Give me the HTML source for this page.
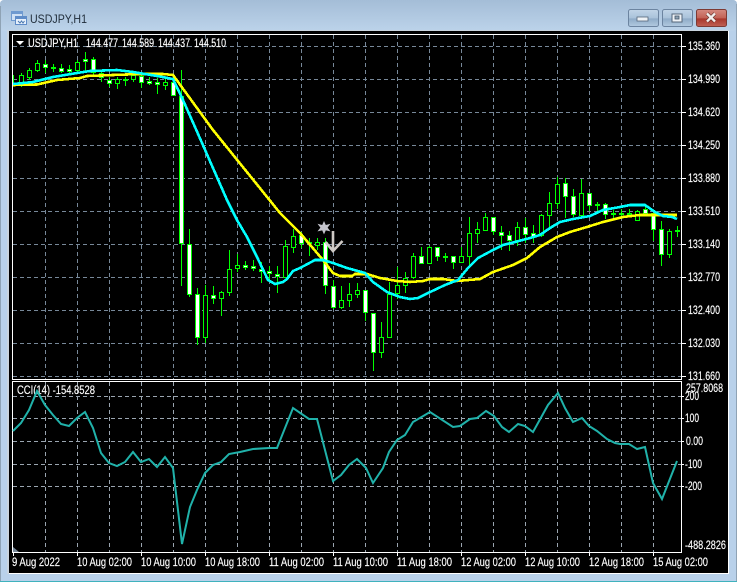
<!DOCTYPE html>
<html><head><meta charset="utf-8"><style>
html,body{margin:0;padding:0;background:#fff}
svg{display:block}
text{font-family:"Liberation Sans",sans-serif;font-size:11.5px;fill:#fff;stroke:#fff;stroke-width:.15}
</style></head><body>
<svg width="739" height="582" viewBox="0 0 739 582" xmlns="http://www.w3.org/2000/svg">
<defs>
<linearGradient id="t" x1="0" y1="0" x2="0" y2="1"><stop offset="0" stop-color="#a4bdd7"/><stop offset="1" stop-color="#bcd3ea"/></linearGradient>
<linearGradient id="b" x1="0" y1="0" x2="0" y2="1"><stop offset="0" stop-color="#c2d5e8"/><stop offset=".5" stop-color="#a9c2da"/><stop offset=".55" stop-color="#8fabc8"/><stop offset="1" stop-color="#b2cae0"/></linearGradient>
<linearGradient id="r" x1="0" y1="0" x2="0" y2="1"><stop offset="0" stop-color="#d58a80"/><stop offset=".5" stop-color="#c26256"/><stop offset=".55" stop-color="#a8362b"/><stop offset="1" stop-color="#c06155"/></linearGradient>
</defs>
<rect x="0" y="0" width="737" height="582" rx="4" fill="#b9d1ea"/>
<rect x="0" y="0" width="737" height="31" rx="4" fill="url(#t)"/>
<path d="M0.5 6V581M736.5 4V581" stroke="#8fa3b5" fill="none"/>
<path d="M0 581.5H737" stroke="#3fb2bd"/>
<path d="M737 0h2v582h-2z" fill="#fff"/>
<!-- icon -->
<g shape-rendering="crispEdges">
<rect x="11.5" y="11.5" width="11" height="9" fill="#cfe0f4" stroke="#6f9ad0"/><rect x="12" y="12" width="10" height="2" fill="#6f9ad0"/>
<rect x="15.5" y="16.5" width="11" height="8" fill="#e6f0fb" stroke="#5f8cc8"/><rect x="16" y="17" width="10" height="2" fill="#5f8cc8"/>
</g>
<path d="M18 21l2 2 1.500-2 1.500 2 1.500-2" stroke="#4a78b0" fill="none"/>
<text x="30" y="23" textLength="57" lengthAdjust="spacingAndGlyphs" style="font-size:12px;fill:#1e2b38;stroke:none">USDJPY,H1</text>
<!-- buttons -->
<rect x="628.500" y="9.500" width="30" height="17" rx="2" fill="url(#b)" stroke="#6c84a0"/>
<rect x="637" y="17" width="11" height="4" fill="#eef2f6" stroke="#55677a" stroke-width=".8"/>
<rect x="662.500" y="9.500" width="30" height="17" rx="2" fill="url(#b)" stroke="#6c84a0"/>
<rect x="672" y="14" width="10" height="8" fill="#eef2f6" stroke="#55677a"/><rect x="675" y="16" width="4" height="3" fill="#8fa3b5" stroke="#44566a" stroke-width=".8"/>
<rect x="696.500" y="9.500" width="30" height="17" rx="2" fill="url(#r)" stroke="#7d3a34"/>
<path d="M707 13.500l8 8M715 13.500l-8 8" stroke="#5b2a25" stroke-width="3.600"/>
<path d="M707 13.500l8 8M715 13.500l-8 8" stroke="#f4f0ee" stroke-width="2.400"/>
<!-- chart bg -->
<rect x="7" y="30" width="722" height="544" fill="#c9d4de"/>
<rect x="9" y="31" width="719" height="542" fill="#000"/>
<path d="M9 573.500H729M728.500 31V574" stroke="#fff" fill="none" shape-rendering="crispEdges"/>
<!-- grid main -->
<g stroke="#778899" fill="none" stroke-dasharray="4 3" shape-rendering="crispEdges">
<path d="M13 46.500H681M13 79.500H681M13 112.500H681M13 145.500H681M13 178.500H681M13 211.500H681M13 244.500H681M13 277.500H681M13 310.500H681M13 343.500H681M13 376.500H681"/>
<path d="M45.500 35V379M77.500 35V379M109.500 35V379M141.500 35V379M173.500 35V379M205.500 35V379M237.500 35V379M269.500 35V379M301.500 35V379M333.500 35V379M365.500 35V379M397.500 35V379M429.500 35V379M461.500 35V379M493.500 35V379M525.500 35V379M557.500 35V379M589.500 35V379M621.500 35V379M653.500 35V379"/>
</g>
<!-- grid indicator -->
<g stroke="#9aa5b0" fill="none" stroke-dasharray="4 3" shape-rendering="crispEdges">
<path d="M13 396.500H681M13 418.500H681M13 441.500H681M13 464.500H681M13 486.500H681"/>
<path d="M45.500 382V552M77.500 382V552M109.500 382V552M141.500 382V552M173.500 382V552M205.500 382V552M237.500 382V552M269.500 382V552M301.500 382V552M333.500 382V552M365.500 382V552M397.500 382V552M429.500 382V552M461.500 382V552M493.500 382V552M525.500 382V552M557.500 382V552M589.500 382V552M621.500 382V552M653.500 382V552"/>
</g>
<!-- frames -->
<path d="M12.500 34.500H681.500V379.500H12.500ZM12.500 381.500H681.500V552.500H12.500Z" stroke="#fff" fill="none" shape-rendering="crispEdges"/>
<path d="M681 46.500h5M681 79.500h5M681 112.500h5M681 145.500h5M681 178.500h5M681 211.500h5M681 244.500h5M681 277.500h5M681 310.500h5M681 343.500h5M681 376.500h5M681 396.500h3M681 418.500h3M681 441.500h3M681 464.500h3M681 486.500h3M13.500 552V556M77.500 552V556M141.500 552V556M205.500 552V556M269.500 552V556M333.500 552V556M397.500 552V556M461.500 552V556M525.500 552V556M589.500 552V556M653.500 552V556" stroke="#fff" fill="none" shape-rendering="crispEdges"/>
<path d="M13 547l6 5h-6z" fill="#778899"/>
<!-- candles: wicks -->
<g fill="none" shape-rendering="crispEdges">
<path stroke="#00ff00" stroke-width="1" d="M13.500 75V84M21.500 73V87M29.500 68V80M37.500 60V72M45.500 60V73M53.500 64V72M61.500 64V73M69.500 65V73M77.500 60V72M85.500 52V71M93.500 57V75M101.500 70V82M109.500 77V87M117.500 77V89M125.500 77V86M133.500 72V82M141.500 74V88M149.500 77V85M157.500 78V94M165.500 78V90M173.500 77V96M181.500 70V286M189.500 229V297M197.500 288V345M205.500 285V343M213.500 286V304M221.500 291V316M229.500 250V296M237.500 254V272M245.500 261V270M253.500 260V271M261.500 262V283M269.500 266V281M277.500 266V293M285.500 240V278M293.500 229V253M301.500 232V248M309.500 238V256M317.500 238V250M325.500 238V294M333.500 280V309M341.500 286V309M349.500 283V307M357.500 283V298M365.500 290V321M373.500 313V371M381.500 322V358M389.500 282V338M397.500 267V299M405.500 272V293M413.500 253V279M421.500 247V264M429.500 246V264M437.500 247V261M445.500 253V262M453.500 256V269M461.500 247V263M469.500 217V267M477.500 222V243M485.500 213V231M493.500 217V235M501.500 226V250M509.500 231V251M517.500 222V246M525.500 218V243M533.500 225V243M541.500 214V237M549.500 192V227M557.500 177V209M565.500 178V218M573.500 189V217M581.500 179V216M589.500 193V211M597.500 202V212M605.500 203V219M613.500 210V218M621.500 209V217M629.500 209V216M637.500 210V221M645.500 204V214M653.500 213V241M661.500 221V266M669.500 229V258M677.500 226V237"/>
<!-- bodies outer -->
<path stroke="#00ff00" stroke-width="5" d="M21.500 75V83M29.500 70V78M37.500 63V71M45.500 64V68M53.500 67V69M61.500 68V72M69.500 69V72M77.500 62V71M85.500 59V62M93.500 59V73M101.500 73V78M109.500 80V84M117.500 79V84M125.500 79V81M133.500 75V80M141.500 76V83M149.500 81V84M157.500 82V85M165.500 82V86M173.500 82V96M181.500 96V244M189.500 244V295M197.500 294V338M205.500 295V338M213.500 295V299M221.500 292V299M229.500 269V293M237.500 265V269M245.500 265V268M253.500 266V269M261.500 269V272M269.500 271V274M277.500 274V277M285.500 246V278M293.500 236V248M301.500 235V244M309.500 242V244M317.500 242V246M325.500 242V286M333.500 286V308M341.500 300V308M349.500 294V301M357.500 290V295M365.500 290V313M373.500 313V353M381.500 337V353M389.500 294V338M397.500 285V294M405.500 278V286M413.500 256V278M421.500 256V264M429.500 247V264M437.500 247V257M445.500 256V258M453.500 256V263M461.500 256V263M469.500 233V257M477.500 229V234M485.500 217V231M493.500 217V232M501.500 232V236M509.500 235V241M517.500 227V241M525.500 227V235M533.500 233V237M541.500 215V236M549.500 203V216M557.500 184V204M565.500 183V197M573.500 196V215M581.500 193V216M589.500 193V206M597.500 204V206M605.500 204V215M613.500 213V215M621.500 213V215M629.500 213V215M637.500 211V221M645.500 209V214M653.500 213V230M661.500 229V255M669.500 231V255M677.500 230V232"/>
<!-- bull inner black -->
<path stroke="#000" stroke-width="3" d="M21.500 76V82M29.500 71V77M37.500 64V70M77.500 63V70M117.500 80V83M133.500 76V79M165.500 83V85M205.500 296V337M221.500 293V298M229.500 270V292M237.500 266V268M285.500 247V277M293.500 237V247M317.500 243V245M341.500 301V307M349.500 295V300M357.500 291V294M381.500 338V352M389.500 295V337M397.500 286V293M405.500 279V285M413.500 257V277M429.500 248V263M461.500 257V262M469.500 234V256M477.500 230V233M485.500 218V230M517.500 228V240M541.500 216V235M549.500 204V215M557.500 185V203M581.500 194V215M637.500 212V220M669.500 232V254"/>
<!-- bear inner white -->
<path stroke="#fff" stroke-width="3" d="M45.500 65V67M61.500 69V71M69.500 70V71M85.500 60V61M93.500 60V72M101.500 74V77M109.500 81V83M141.500 77V82M149.500 82V83M157.500 83V84M173.500 83V95M181.500 97V243M189.500 245V294M197.500 295V337M213.500 296V298M245.500 266V267M253.500 267V268M261.500 270V271M269.500 272V273M277.500 275V276M301.500 236V243M325.500 243V285M333.500 287V307M365.500 291V312M373.500 314V352M421.500 257V263M437.500 248V256M453.500 257V262M493.500 218V231M501.500 233V235M509.500 236V240M525.500 228V234M533.500 234V236M565.500 184V196M573.500 197V214M589.500 194V205M605.500 205V214M645.500 210V213M653.500 214V229M661.500 230V254"/>
</g>
<!-- MAs -->
<polyline fill="none" stroke="#ffff00" stroke-width="2.600" shape-rendering="crispEdges" points="13,85 37,84.500 57,80 80,78 87,76 113,75 140,74 163,74 173,75 213,130 280,213 300,233 323,260 333,273 340,276 352,276 355,274 367,274 380,278 397,281 410,282 423,281 430,279 443,279 457,281 480,279 493,272 513,265 527,258 540,247 557,237 570,232 587,227 603,222 623,217 640,215 677,215"/>
<polyline fill="none" stroke="#00ffff" stroke-width="2.600" shape-rendering="crispEdges" points="13,84 33,82 53,77 77,73 90,71 117,70 133,72 157,76 173,79 183,100 195,127 227,200 237,220 247,237 257,257 268,280 275,284 283,282 287,279 293,271 300,268 315,260 323,260 333,263 347,268 365,273 373,282 387,292 400,297 410,299 418,298 428,293 445,285 458,280 468,268 478,258 493,250 503,245 515,242 530,238 540,235 550,228 560,222 573,219 590,216 603,210 620,207 630,205 645,205 655,212 663,216 672,217 677,219"/>
<!-- star and arrow -->
<path d="M324 221l1.800 4 4.700-1.200-2.900 3.800 2.900 3.800-4.700-1-1.800 4-1.800-4-4.700 1 2.900-3.800-2.900-3.800 4.700 1.200z" fill="#c4c4cc"/>
<path d="M333 231V250M325.500 242L333 251 342.500 241" fill="none" stroke="#cfcac6" stroke-width="2.600"/>
<!-- header -->
<path d="M16 41h8l-4 4z" fill="#fff"/>
<text x="28" y="47" textLength="50" lengthAdjust="spacingAndGlyphs">USDJPY,H1</text>
<text x="86" y="47" textLength="32" lengthAdjust="spacingAndGlyphs">144.477</text>
<text x="122" y="47" textLength="32" lengthAdjust="spacingAndGlyphs">144.589</text>
<text x="158" y="47" textLength="32" lengthAdjust="spacingAndGlyphs">144.437</text>
<text x="194" y="47" textLength="32" lengthAdjust="spacingAndGlyphs">144.510</text>
<text x="17" y="394" textLength="78" lengthAdjust="spacingAndGlyphs">CCI(14) -154.8528</text>
<!-- CCI -->
<polyline fill="none" stroke="#20b2aa" stroke-width="2" points="13,431 21,423 29,410 37,391 45,405 53,415 61,424 69,426 77,418 85,412 93,428 101,453 109,463 117,466 125,462 133,452 141,462 149,459 157,467 165,457 173,468 182,544 190,507 197,490 205,473 213,465 221,462 229,454 240,452 253,449 269,448 277,448 293,408 309,419 317,419 333,481 341,475 349,465 357,459 366,468 373,483 383,468 389,452 397,440 405,435 413,422 430,412 453,427 460,426 470,419 477,418 486,411 494,416 502,427 509,432 518,424 525,426 533,432 548,405 558,393 565,408 573,422 582,418 589,426 597,431 607,439 615,443 620,444 629,444 637,449 645,447 653,483 662,499 677,461"/>
<!-- price labels -->
<text x="688" y="50" textLength="32" lengthAdjust="spacingAndGlyphs">135.360</text>
<text x="688" y="83" textLength="32" lengthAdjust="spacingAndGlyphs">134.990</text>
<text x="688" y="116" textLength="32" lengthAdjust="spacingAndGlyphs">134.620</text>
<text x="688" y="149" textLength="32" lengthAdjust="spacingAndGlyphs">134.250</text>
<text x="688" y="182" textLength="32" lengthAdjust="spacingAndGlyphs">133.880</text>
<text x="688" y="215" textLength="32" lengthAdjust="spacingAndGlyphs">133.510</text>
<text x="688" y="248" textLength="32" lengthAdjust="spacingAndGlyphs">133.140</text>
<text x="688" y="281" textLength="32" lengthAdjust="spacingAndGlyphs">132.770</text>
<text x="688" y="314" textLength="32" lengthAdjust="spacingAndGlyphs">132.400</text>
<text x="688" y="347" textLength="32" lengthAdjust="spacingAndGlyphs">132.030</text>
<text x="688" y="380" textLength="32" lengthAdjust="spacingAndGlyphs">131.660</text>
<!-- indicator labels -->
<text x="686" y="392" textLength="37" lengthAdjust="spacingAndGlyphs">257.8068</text>
<text x="685" y="400" textLength="14" lengthAdjust="spacingAndGlyphs">200</text>
<text x="685" y="422" textLength="14" lengthAdjust="spacingAndGlyphs">100</text>
<text x="686" y="445" textLength="17" lengthAdjust="spacingAndGlyphs">0.00</text>
<text x="685" y="468" textLength="17" lengthAdjust="spacingAndGlyphs">-100</text>
<text x="685" y="490" textLength="17" lengthAdjust="spacingAndGlyphs">-200</text>
<text x="685" y="549" textLength="41" lengthAdjust="spacingAndGlyphs">-488.2826</text>
<!-- time labels -->
<text x="12" y="566" textLength="48" lengthAdjust="spacingAndGlyphs">9 Aug 2022</text>
<text x="77" y="566" textLength="55" lengthAdjust="spacingAndGlyphs">10 Aug 02:00</text>
<text x="141" y="566" textLength="55" lengthAdjust="spacingAndGlyphs">10 Aug 10:00</text>
<text x="205" y="566" textLength="55" lengthAdjust="spacingAndGlyphs">10 Aug 18:00</text>
<text x="269" y="566" textLength="55" lengthAdjust="spacingAndGlyphs">11 Aug 02:00</text>
<text x="333" y="566" textLength="55" lengthAdjust="spacingAndGlyphs">11 Aug 10:00</text>
<text x="397" y="566" textLength="55" lengthAdjust="spacingAndGlyphs">11 Aug 18:00</text>
<text x="461" y="566" textLength="55" lengthAdjust="spacingAndGlyphs">12 Aug 02:00</text>
<text x="525" y="566" textLength="55" lengthAdjust="spacingAndGlyphs">12 Aug 10:00</text>
<text x="589" y="566" textLength="55" lengthAdjust="spacingAndGlyphs">12 Aug 18:00</text>
<text x="653" y="566" textLength="55" lengthAdjust="spacingAndGlyphs">15 Aug 02:00</text>
</svg>
</body></html>
